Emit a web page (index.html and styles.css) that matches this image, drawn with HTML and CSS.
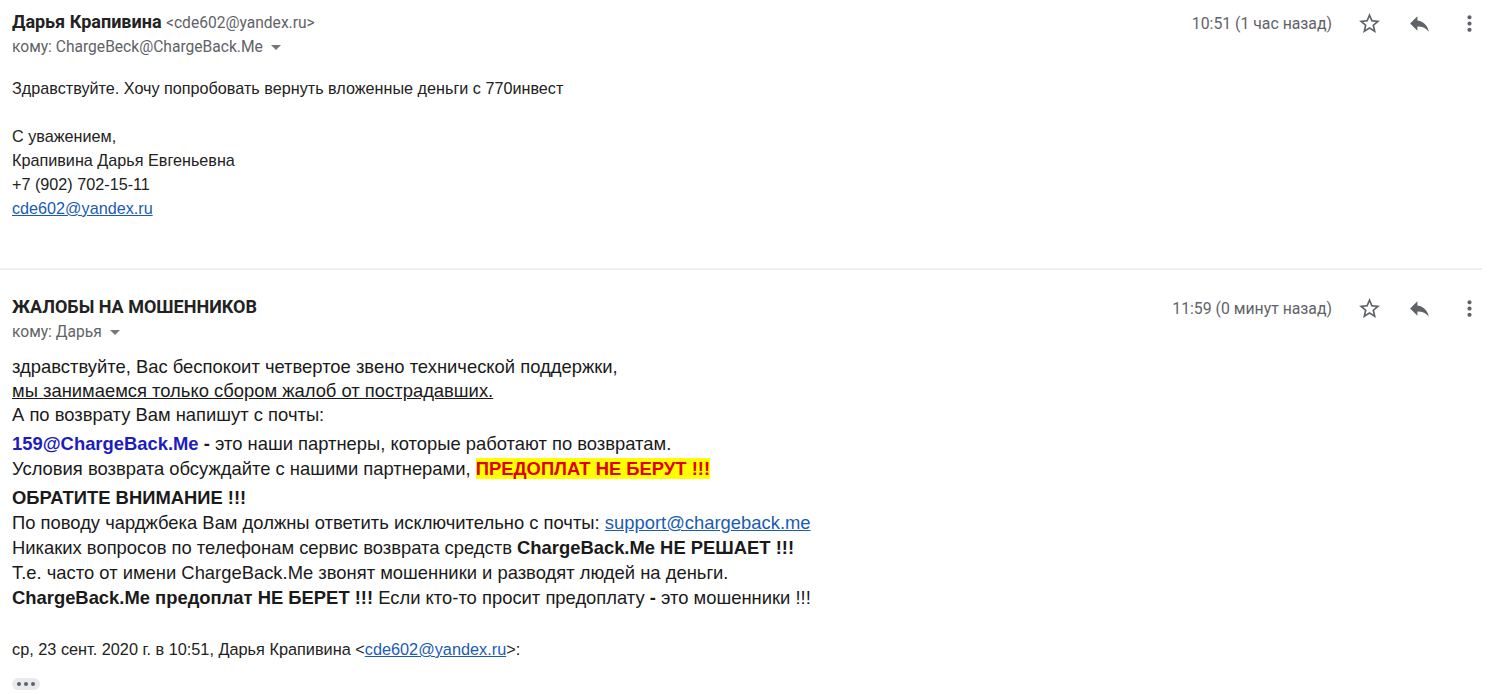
FILE: index.html
```html
<!DOCTYPE html>
<html lang="ru">
<head>
<meta charset="utf-8">
<title>Письма</title>
<link rel="stylesheet" href="styles.css">
</head>
<body>
<div class="thread">
  <div class="msg msg-first">
    <div class="head">
      <div class="who">
        <div class="from"><span class="name">Дарья Крапивина</span> <span class="addr">&lt;cde602@yandex.ru&gt;</span></div>
        <div class="to">кому: ChargeBeck@ChargeBack.Me <span class="caret"></span></div>
      </div>
      <div class="meta">
        <span class="time">10:51 (1 час назад)</span>
        <span class="icon"><svg viewBox="0 0 24 24" width="25" height="25"><path fill="#5f6368" d="M22 9.24l-7.19-.62L12 2 9.19 8.63 2 9.24l5.46 4.73L5.82 21 12 17.27 18.18 21l-1.63-7.03L22 9.24zM12 15.4l-3.76 2.27 1-4.28-3.32-2.88 4.38-.38L12 6.1l1.71 4.04 4.38.38-3.32 2.88 1 4.28L12 15.4z"/></svg></span>
        <span class="icon"><svg viewBox="0 0 24 24" width="25" height="25"><path fill="#5f6368" d="M10 9V5l-7 7 7 7v-4.1c5 0 8.5 1.6 11 5.1-1-5-4-10-11-11z"/></svg></span>
        <span class="icon"><svg viewBox="0 0 24 24" width="25" height="25"><path fill="#5f6368" d="M12 8c1.1 0 2-.9 2-2s-.9-2-2-2-2 .9-2 2 .9 2 2 2zm0 2c-1.1 0-2 .9-2 2s.9 2 2 2 2-.9 2-2-.9-2-2-2zm0 6c-1.1 0-2 .9-2 2s.9 2 2 2 2-.9 2-2-.9-2-2-2z"/></svg></span>
      </div>
    </div>
    <div class="body small">
      <p>Здравствуйте. Хочу попробовать вернуть вложенные деньги с 770инвест</p>
      <p class="gap">С уважением,<br>Крапивина Дарья Евгеньевна<br>+7 (902) 702-15-11<br><a href="#">cde602@yandex.ru</a></p>
    </div>
  </div>
  <div class="divider"></div>
  <div class="msg msg-second">
    <div class="head">
      <div class="who">
        <div class="from"><span class="name">ЖАЛОБЫ НА МОШЕННИКОВ</span></div>
        <div class="to">кому: Дарья <span class="caret"></span></div>
      </div>
      <div class="meta">
        <span class="time">11:59 (0 минут назад)</span>
        <span class="icon"><svg viewBox="0 0 24 24" width="25" height="25"><path fill="#5f6368" d="M22 9.24l-7.19-.62L12 2 9.19 8.63 2 9.24l5.46 4.73L5.82 21 12 17.27 18.18 21l-1.63-7.03L22 9.24zM12 15.4l-3.76 2.27 1-4.28-3.32-2.88 4.38-.38L12 6.1l1.71 4.04 4.38.38-3.32 2.88 1 4.28L12 15.4z"/></svg></span>
        <span class="icon"><svg viewBox="0 0 24 24" width="25" height="25"><path fill="#5f6368" d="M10 9V5l-7 7 7 7v-4.1c5 0 8.5 1.6 11 5.1-1-5-4-10-11-11z"/></svg></span>
        <span class="icon"><svg viewBox="0 0 24 24" width="25" height="25"><path fill="#5f6368" d="M12 8c1.1 0 2-.9 2-2s-.9-2-2-2-2 .9-2 2 .9 2 2 2zm0 2c-1.1 0-2 .9-2 2s.9 2 2 2 2-.9 2-2-.9-2-2-2zm0 6c-1.1 0-2 .9-2 2s.9 2 2 2 2-.9 2-2-.9-2-2-2z"/></svg></span>
      </div>
    </div>
    <div class="body big">
      <div class="line">здравствуйте, Вас беспокоит четвертое звено технической поддержки,</div>
      <div class="line"><u>мы занимаемся только сбором жалоб от пострадавших.</u></div>
      <div class="line">А по возврату Вам напишут с почты:</div>
      <div class="line l25 l-gap1"><b class="blue">159@ChargeBack.Me</b> <b>-</b> это наши партнеры, которые работают по возвратам.</div>
      <div class="line l25">Условия возврата обсуждайте с нашими партнерами, <span class="hl">ПРЕДОПЛАТ НЕ БЕРУТ !!!</span></div>
      <div class="line l25 l-gap2"><b>ОБРАТИТЕ ВНИМАНИЕ !!!</b></div>
      <div class="line l25">По поводу чарджбека Вам должны ответить исключительно с почты: <a href="#">support@chargeback.me</a></div>
      <div class="line l25">Никаких вопросов по телефонам сервис возврата средств <b>ChargeBack.Me НЕ РЕШАЕТ !!!</b></div>
      <div class="line l25">Т.е. часто от имени ChargeBack.Me звонят мошенники и разводят людей на деньги.</div>
      <div class="line l25"><b>ChargeBack.Me предоплат НЕ БЕРЕТ !!!</b> Если кто-то просит предоплату <b>-</b> это мошенники !!!</div>
    </div>
    <div class="quote-head">ср, 23 сент. 2020 г. в 10:51, Дарья Крапивина &lt;<a href="#">cde602@yandex.ru</a>&gt;:</div>
    <div class="more-btn"><span></span><span></span><span></span></div>
  </div>
</div>
</body>
</html>
```

FILE: styles.css
```css
html, body {
  margin: 0;
  padding: 0;
  background: #fff;
}
body {
  font-family: Roboto, "Liberation Sans", Arial, sans-serif;
  color: #222;
  overflow: hidden;
}
.thread {
  width: 1482px;
}
.msg {
  padding-left: 12px;
}
.msg-first {
  padding-top: 10px;
}
.msg-second {
  padding-top: 25px;
}
.head {
  display: flex;
  justify-content: space-between;
  align-items: flex-start;
}
.from {
  font-size: 18px;
  line-height: 24px;
  height: 24px;
  white-space: nowrap;
}
.name {
  font-weight: 700;
  color: #222;
}
.addr {
  font-size: 15.6px;
  color: #5f6368;
}
.to {
  font-size: 15.6px;
  color: #5f6368;
  line-height: 20px;
  margin-top: 3px;
}
.caret {
  display: inline-block;
  width: 0;
  height: 0;
  border-left: 5px solid transparent;
  border-right: 5px solid transparent;
  border-top: 5px solid #777;
  vertical-align: middle;
  margin-left: 4px;
}
.meta {
  display: flex;
  align-items: center;
  height: 26px;
}
.time {
  font-size: 15.8px;
  color: #5f6368;
  margin-right: 25px;
}
.icon {
  width: 25px;
  height: 25px;
  display: block;
}
.icon + .icon {
  margin-left: 25px;
}
.body {
  font-family: "Liberation Sans", Arial, sans-serif;
}
.small {
  font-size: 16.2px;
  line-height: 24px;
  margin-top: 19px;
  padding-bottom: 48px;
  color: #222;
}
.small p {
  margin: 0;
}
.small p.gap {
  margin-top: 24px;
}
a {
  color: #1a5bb5;
  text-decoration: underline;
}
.divider {
  height: 2px;
  background: #efefef;
}
.big {
  font-size: 18.4px;
  line-height: 24px;
  margin-top: 13px;
  color: #1a1a1a;
}
.line {
  height: 24px;
  white-space: nowrap;
}
.l25 {
  height: 25px;
  line-height: 25px;
}
.l-gap1 {
  margin-top: 4px;
}
.l-gap2 {
  margin-top: 4px;
}
.blue {
  color: #1c1cc0;
}
.hl {
  background: #ffff00;
  color: #e00000;
  font-weight: 700;
}
.quote-head {
  font-family: "Liberation Sans", Arial, sans-serif;
  font-size: 16.3px;
  color: #222;
  margin-top: 27px;
  line-height: 24px;
}
.more-btn {
  margin-top: 17px;
  width: 28px;
  height: 12px;
  background: #e8eaed;
  border-radius: 6px;
  display: flex;
  align-items: center;
  justify-content: center;
  gap: 3px;
}
.more-btn span {
  width: 4px;
  height: 4px;
  border-radius: 50%;
  background: #5f6368;
}
```
